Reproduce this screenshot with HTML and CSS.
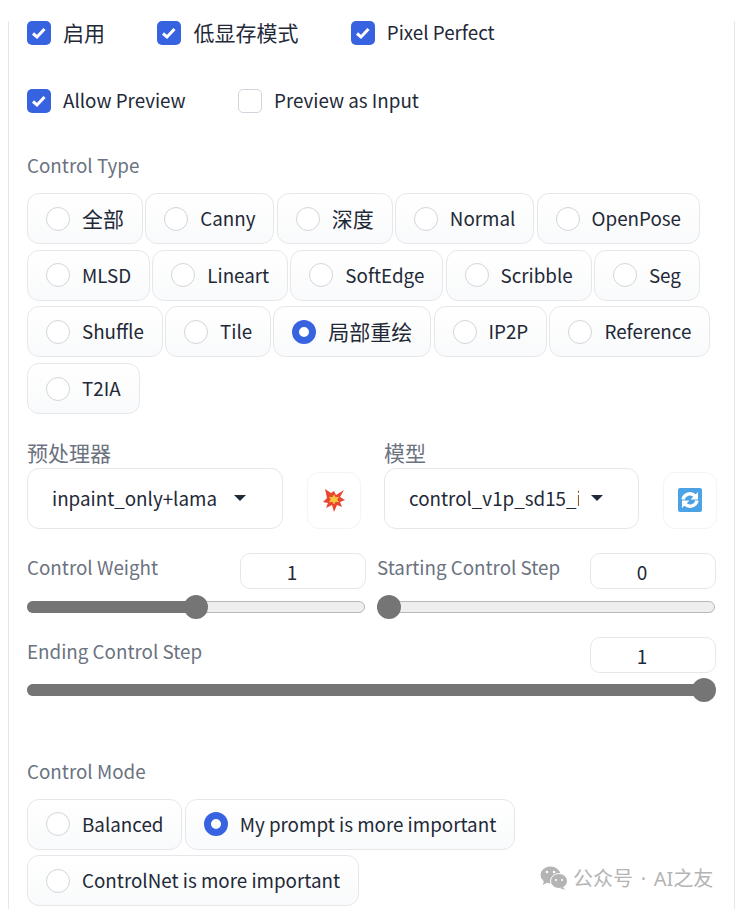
FILE: index.html
```html
<!DOCTYPE html>
<html lang="en">
<head>
  <meta charset="UTF-8" />
  <meta name="viewport" content="width=device-width, initial-scale=1.0"/>
  <title>ControlNet</title>
  <link rel="stylesheet" href="styles.css">
</head>
<body>

  <div class="panel">

    <div class="check-row first">
      <label class="check"><span class="box on"><svg viewBox="0 0 24 24"><path d="M6 12.500l4 3.500 7.500-8"/></svg></span><span class="cjk">启用</span></label>
      <label class="check"><span class="box on"><svg viewBox="0 0 24 24"><path d="M6 12.500l4 3.500 7.500-8"/></svg></span><span class="cjk">低显存模式</span></label>
      <label class="check"><span class="box on"><svg viewBox="0 0 24 24"><path d="M6 12.500l4 3.500 7.500-8"/></svg></span>Pixel Perfect</label>
    </div>

    <div class="check-row second">
      <label class="check"><span class="box on"><svg viewBox="0 0 24 24"><path d="M6 12.500l4 3.500 7.500-8"/></svg></span>Allow Preview</label>
      <label class="check"><span class="box"></span>Preview as Input</label>
    </div>

    <div class="label type-label">Control Type</div>
    <div class="pills">
      <div class="pill"><span class="dot"></span><span class="cjk">全部</span></div>
      <div class="pill"><span class="dot"></span>Canny</div>
      <div class="pill"><span class="dot"></span><span class="cjk">深度</span></div>
      <div class="pill"><span class="dot"></span>Normal</div>
      <div class="pill"><span class="dot"></span>OpenPose</div>
      <div class="pill"><span class="dot"></span>MLSD</div>
      <div class="pill"><span class="dot"></span>Lineart</div>
      <div class="pill"><span class="dot"></span>SoftEdge</div>
      <div class="pill"><span class="dot"></span>Scribble</div>
      <div class="pill"><span class="dot"></span>Seg</div>
      <div class="pill"><span class="dot"></span>Shuffle</div>
      <div class="pill"><span class="dot"></span>Tile</div>
      <div class="pill"><span class="dot on"></span><span class="cjk">局部重绘</span></div>
      <div class="pill"><span class="dot"></span>IP2P</div>
      <div class="pill"><span class="dot"></span>Reference</div>
      <div class="pill"><span class="dot"></span>T2IA</div>
    </div>

    <div class="selects">
      <div class="select-col">
        <div class="label cjk">预处理器</div>
        <div class="select-row">
          <div class="select"><span class="select-text">inpaint_only+lama</span><span class="caret"></span></div>
          <div class="tool">
            <svg viewBox="0 0 24 24" width="24" height="24">
              <path fill="#ea4530" d="M3 1l6 4 3-2 2 4 8-5-4 7 5 3-5 2 2 5-5-2-3 7-2-7-6 3 2-5-5-1 4-4z"/>
              <path fill="#f7c63d" d="M12 6.500l1.700 2.800 3.300-.600-1.700 2.800 1.700 2.800-3.300-.600-1.700 2.800-1.700-2.800-3.300 .600 1.700-2.800-1.700-2.800 3.300 .600z"/>
            </svg>
          </div>
        </div>
      </div>
      <div class="select-col">
        <div class="label cjk">模型</div>
        <div class="select-row">
          <div class="select"><span class="select-text">control_v1p_sd15_inpaint</span><span class="caret"></span></div>
          <div class="tool">
            <svg viewBox="0 0 24 24" width="24" height="24">
              <rect width="24" height="24" rx="2" fill="#4ba3e6"/>
              <path fill="none" stroke="#fff" stroke-width="3.400" d="M5 11.500a7 7 0 0 1 12-3.500M19 12.500a7 7 0 0 1-12 3.500"/>
              <path fill="#fff" d="M20 4v7.500h-7.500zM4 20v-7.500h7.500z"/>
            </svg>
          </div>
        </div>
      </div>
    </div>

    <div class="sliders">
      <div class="slider">
        <div class="slider-head"><span class="label">Control Weight</span><div class="num">1</div></div>
        <div class="track"><div class="fill half"></div><span class="thumb"></span></div>
      </div>
      <div class="slider">
        <div class="slider-head"><span class="label">Starting Control Step</span><div class="num">0</div></div>
        <div class="track"><div class="fill none"></div><span class="thumb"></span></div>
      </div>
      <div class="slider wide">
        <div class="slider-head"><span class="label">Ending Control Step</span><div class="num">1</div></div>
        <div class="track"><div class="fill full"></div><span class="thumb"></span></div>
      </div>
    </div>

    <div class="label mode-label">Control Mode</div>
    <div class="pills">
      <div class="pill"><span class="dot"></span>Balanced</div>
      <div class="pill"><span class="dot on"></span>My prompt is more important</div>
      <div class="pill"><span class="dot"></span>ControlNet is more important</div>
    </div>

  </div>

  <!-- watermark -->
  <div class="watermark">
    <svg viewBox="0 0 28 24" width="28" height="24">
      <ellipse cx="10.500" cy="9" rx="10" ry="8.500" fill="#b4b4b4"/>
      <path fill="#b4b4b4" d="M4 14l-1 5 5-3z"/>
      <ellipse cx="19" cy="15" rx="8.500" ry="7.500" fill="#b4b4b4" stroke="#fff"/>
      <path fill="#b4b4b4" d="M23 21l2 3-5-2z"/>
      <circle cx="7" cy="6" r="1.300" fill="#fff"/>
      <circle cx="14" cy="6" r="1.300" fill="#fff"/>
      <circle cx="16" cy="14" r="1.100" fill="#fff"/>
      <circle cx="22" cy="14" r="1.100" fill="#fff"/>
    </svg>
    <span>公众号 · AI之友</span>
  </div>

</body>
</html>
```

FILE: styles.css
```css
* {
  box-sizing: border-box;
}
html, body {
  margin: 0;
  padding: 0;
  height: 909px;
  overflow: hidden;
  background-color: #fff;
  font-family: "Noto Sans CJK SC", "Noto Sans", sans-serif;
  color: #1f2937;
}
body {
  position: relative;
}
.panel {
  margin-left: 8px;
  width: 727px;
  height: 909px;
  border-left: 1px solid #e5e7eb;
  border-right: 1px solid #e5e7eb;
  padding-left: 18px;
  padding-right: 18px;
  font-size: 18.800px;
}
.cjk {
  font-size: 21px;
}

/* Checkboxes */
.check-row {
  display: flex;
  height: 24px;
  align-items: center;
  gap: 52.400px;
}
.check-row.first {
  margin-top: 21px;
}
.check-row.second {
  margin-top: 44px;
}
.check {
  display: flex;
  align-items: center;
  gap: 12px;
  padding-bottom: 2px;
  line-height: 24px;
}
.box {
  width: 24px;
  height: 24px;
  margin-top: 2px;
  border-radius: 5px;
  border: 1px solid #d1d5db;
  background: #fff;
  flex: none;
}
.box.on {
  background: #3763e0;
  border: none;
}
.box svg {
  display: block;
  width: 24px;
  height: 24px;
}
.box path {
  fill: none;
  stroke: #fff;
  stroke-width: 3;
}

.label {
  color: #6b7280;
  line-height: 24px;
  padding-bottom: 2px;
}
.type-label {
  margin-top: 40px;
}
.mode-label {
  margin-top: 63px;
}

/* Radio pills */
.pills {
  display: flex;
  flex-wrap: wrap;
  gap: 5.700px 2.200px;
  margin-top: 14px;
}
.pill {
  display: flex;
  align-items: center;
  gap: 12px;
  height: 51px;
  padding: 0 18px 2px;
  border: 1px solid #e5e7eb;
  border-radius: 12px;
  background: linear-gradient(to bottom, #fff, #f9fafb);
  white-space: nowrap;
}
.dot {
  width: 24px;
  height: 24px;
  margin-top: 2px;
  border-radius: 50%;
  border: 1px solid #d1d5db;
  background: #fff;
  flex: none;
}
.dot.on {
  border: 7px solid #3763e0;
}

/* Dropdowns */
.selects {
  display: grid;
  grid-template-columns: 334px 333px;
  column-gap: 23px;
  margin-top: 25.500px;
}
.select-row {
  display: flex;
  align-items: flex-end;
  gap: 24px;
  margin-top: 2px;
}
.select {
  width: 256px;
  height: 61px;
  padding: 0 24px;
  display: flex;
  align-items: center;
  border: 1px solid #e5e7eb;
  border-radius: 12px;
  background: #fff;
}
.select-text {
  width: 170px;
  margin-bottom: 2px;
  overflow: hidden;
  white-space: nowrap;
  flex: none;
}
.select .caret {
  margin-left: 12px;
  border-left: 6px solid transparent;
  border-right: 6px solid transparent;
  border-top: 6px solid #1f2937;
}
.tool {
  width: 54px;
  height: 57px;
  display: flex;
  align-items: center;
  justify-content: center;
  border: 1px solid #f3f4f6;
  border-radius: 12px;
  background: #fff;
}

/* Sliders */
.sliders {
  display: grid;
  grid-template-columns: 339px 339px;
  column-gap: 11px;
  margin-top: 24px;
}
.slider.wide {
  grid-column: 1 / 3;
  margin-top: 24px;
}
.slider.wide .track {
  margin-top: 11px;
}
.slider-head {
  display: flex;
  justify-content: space-between;
  height: 36px;
}
.slider-head .label {
  line-height: 28px;
}
.num {
  width: 126px;
  height: 36px;
  padding-right: 22px;
  border: 1px solid #e5e7eb;
  border-radius: 10px;
  text-align: center;
  font-size: 19px;
  line-height: 36px;
  background: #fff;
}
.track {
  position: relative;
  height: 12px;
  margin-top: 12px;
  margin-right: 1px;
  border: 1px solid #b8b8b8;
  border-radius: 6px;
  background: #eee;
}
.fill {
  height: 12px;
  margin: -1px;
  border-radius: 6px;
  background: #757575;
}
.fill.half {
  width: 50%;
}
.fill.none {
  width: 0;
}
.fill.full {
  width: calc(100% + 2px);
}
.thumb {
  position: absolute;
  top: -7px;
  left: calc(50% - 12px);
  width: 24px;
  height: 24px;
  border-radius: 50%;
  background: #757575;
}
.fill.none + .thumb {
  left: -1px;
}
.fill.full + .thumb {
  left: auto;
  right: -2px;
}

/* Watermark */
.watermark {
  position: absolute;
  left: 540px;
  top: 863px;
  display: flex;
  align-items: center;
  gap: 5px;
  font-family: "Noto Sans", "Noto Sans CJK SC", sans-serif;
  font-size: 20px;
  word-spacing: 2.500px;
  color: #b4b4b4;
}
```
